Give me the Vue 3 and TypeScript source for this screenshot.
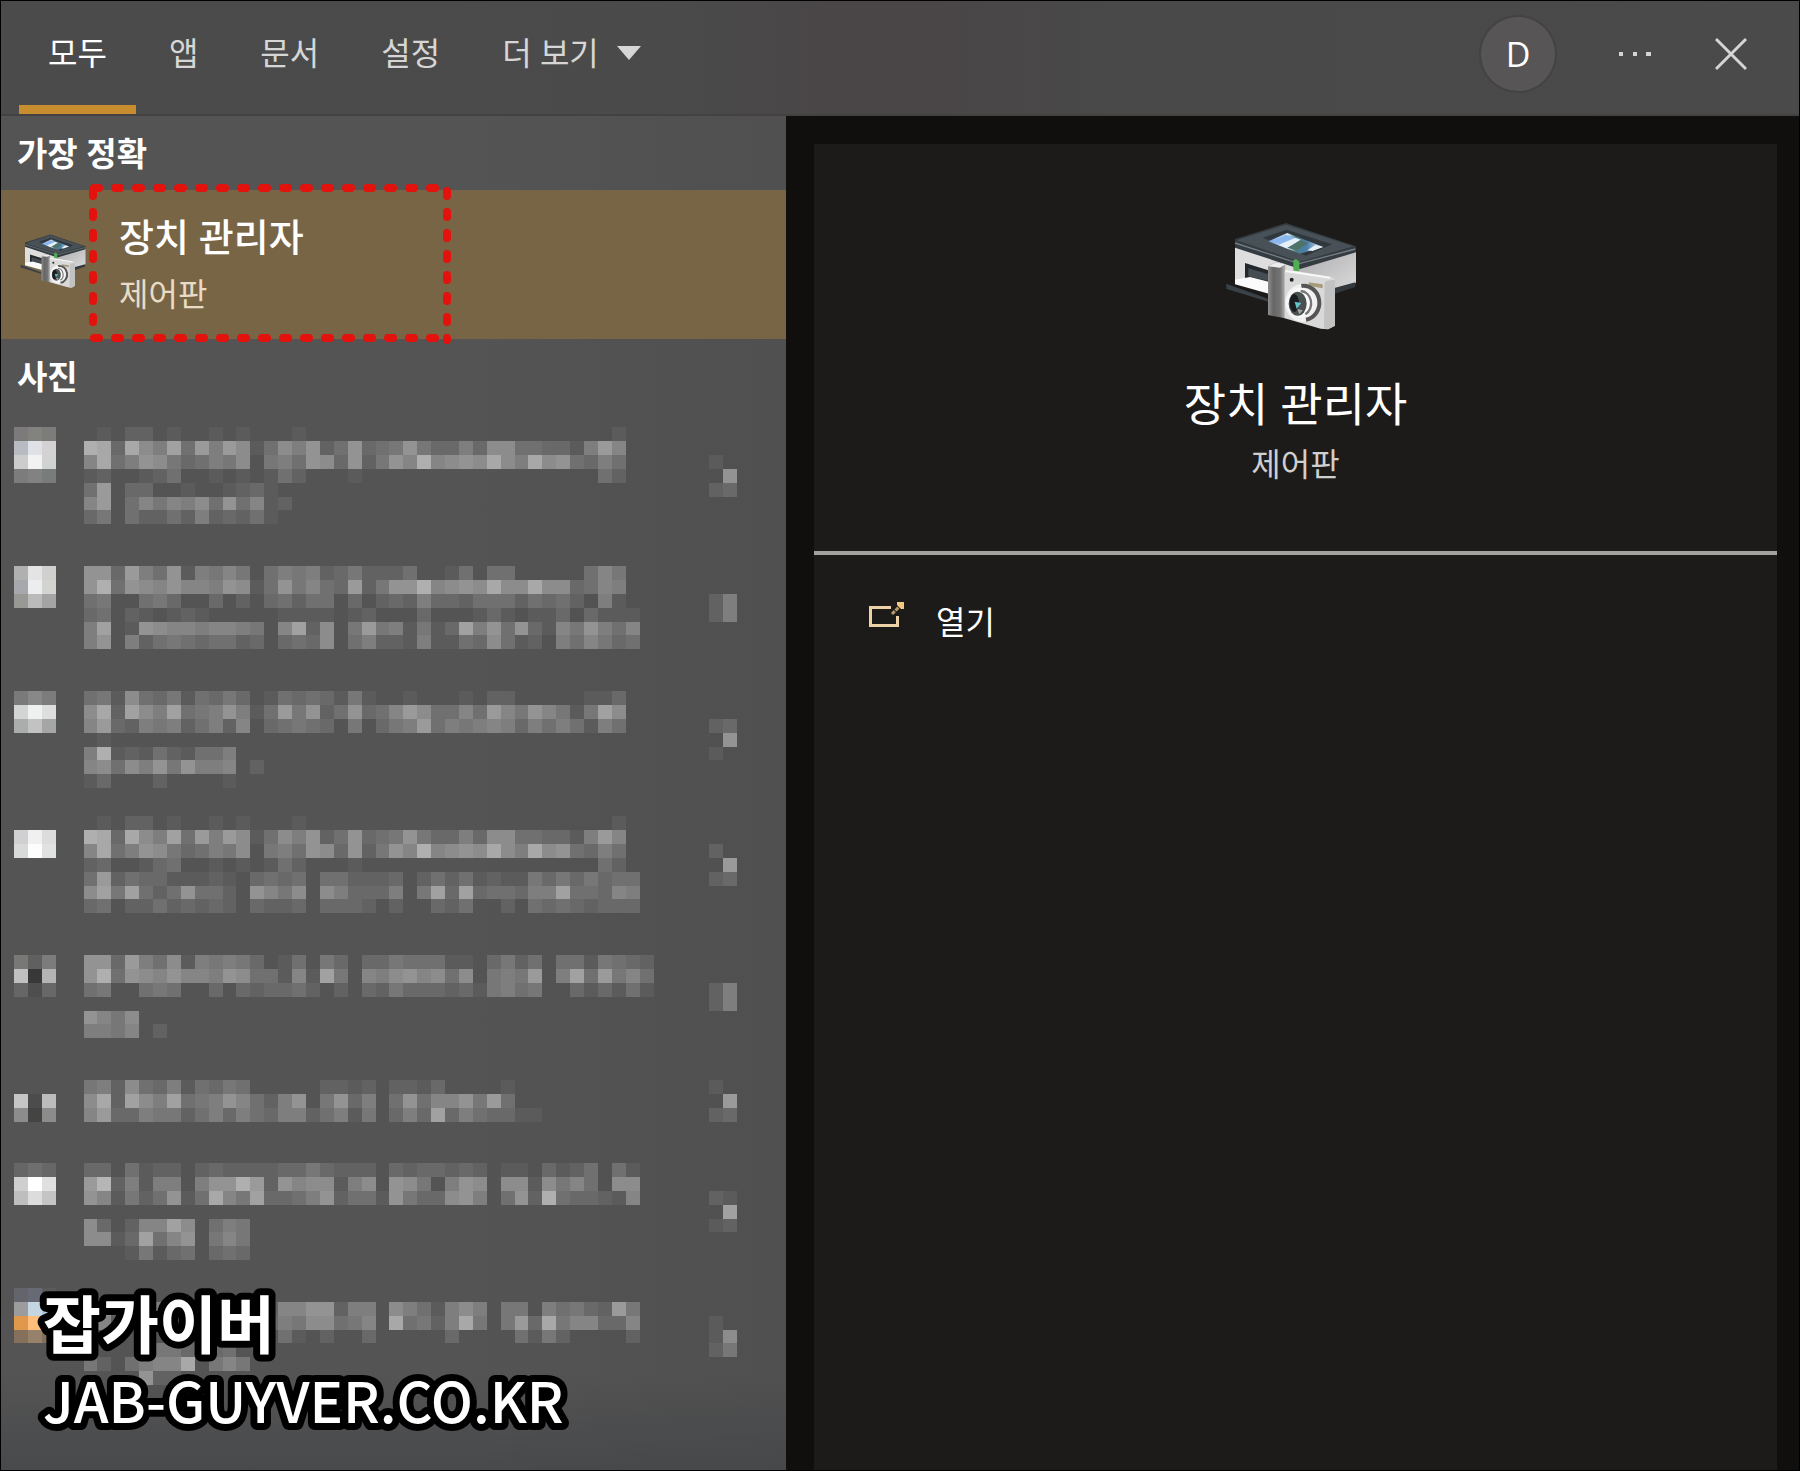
<script setup lang="ts">
import { ref } from 'vue'

interface Cell {
  x: number
  y: number
  fill: string
}

interface PhotoResult {
  rows: number
  thumbTop: number
  thumb: string[][]
  text: string[]
  chevronTop: number
  chevron: string[]
}

const tabs = ['모두', '앱', '문서', '설정']
const activeTab = ref('모두')

const MOSAIC_WIDTH = 723
const COLUMNS = 52
const TEXT_COL = 5
const CHEVRON_COL = 50

// Each character is the brightness of one mosaic tile; a dot leaves the panel visible.
const photos: PhotoResult[] = [
  {
    rows: 10,
    thumbTop: 0,
    thumb: [
      ['#7c7a7a', '#82827e', '#7c7c7a'],
      ['#b8bcc2', '#dfe1e6', '#d4d2d3'],
      ['#cccccc', '#f2f2f2', '#d1d3d2'],
      ['#7c7c7c', '#828282', '#787c7b'],
    ],
    text: [
      '.1.22.1..1.1...1......................1',
      'dc3c86b4a6a81486924934595336388443316a7',
      '7c4698534658.56498392597d7898c86c894364',
      '12..124..1.1.142...1.................42',
      '4a.33..1..1231',
      '7a.475768494712',
      '35.42242623241',
    ],
    chevronTop: 2,
    chevron: ['1.', '.9', '23'],
  },
  {
    rows: 9,
    thumbTop: 0,
    thumb: [
      ['#b0b0b0', '#e4e4e4', '#d0d0ce'],
      ['#a6a8ae', '#ebedee', '#d3d3d0'],
      ['#989894', '#bababa', '#a4a4a4'],
    ],
    text: [
      '993a64916575.46562352224..14.44.....475',
      '9d49879776981495743a2599d7898c88c883476',
      '45..453..3.2.34244.3.232633244424342.61',
      '34.21.121.....1111.12...3...131.113.3111',
      '6b.1987767765.7b28.5a561513b694931759647',
      '69.6245434423.3438.46221611438412.647534',
    ],
    chevronTop: 2,
    chevron: ['26', '26'],
  },
  {
    rows: 9,
    thumbTop: 0,
    thumb: [
      ['#7a7a7a', '#888888', '#7c7c7c'],
      ['#d3d5d4', '#eff0f0', '#dededf'],
      ['#abadac', '#c2c2c2', '#a4a6a5'],
    ],
    text: [
      '451843514353.14343151..1...1.22.....113',
      '8c2b86b4569614a59249347a84474a7597515b8',
      '7a3265624627.34543.5.356a46567636464164',
      '.1',
      '6d121421446',
      '78486959667.2',
      '13...2....1',
    ],
    chevronTop: 2,
    chevron: ['23', '.9', '1.'],
  },
  {
    rows: 10,
    thumbTop: 1,
    thumb: [
      ['#d0d0d2', '#f0f0f0', '#dcdcdc'],
      ['#d8dad9', '#fcfdfc', '#dfe2e1'],
    ],
    text: [
      '.1.22.1..1.1...1......................1',
      'dc3c86b4a6a81486924934595336388443316a7',
      '7c4698534658.56498392597d7898c86c894364',
      '23..134..1.1.142...1.................42',
      '4a243311121.3434.442223.2424121153535344',
      '8b5b4249442.9758.863336.5b3b344366b44376',
      '34.22423232.3223.3332.2..324..2.43432333',
    ],
    chevronTop: 2,
    chevron: ['2.', '.a', '23'],
  },
  {
    rows: 9,
    thumbTop: 0,
    thumb: [
      ['#787876', '#606060', '#7c7c7c'],
      ['#c0c0c0', '#383838', '#b4b4b4'],
      ['#666666', '#4e4e4e', '#686868'],
    ],
    text: [
      '993a648165653.14.53.33544411.3524.4415432',
      '9d498797769844171b5.76897848.565a.6b4a574',
      '45..454..3.323342.2.3253332315645..313141',
      '',
      '9758',
      '6657.2',
    ],
    chevronTop: 2,
    chevron: ['26', '26'],
  },
  {
    rows: 6,
    thumbTop: 1,
    thumb: [
      ['#c6c6c6', '#4c4c4c', '#bcbcbc'],
      ['#8c8c8c', '#444442', '#8c8c8c'],
    ],
    text: [
      '562843614354.....2212.2213....1',
      '8c2b86b456974269.5936.4947795a4',
      '7a3365524636436624615.363b3643311',
    ],
    chevronTop: 0,
    chevron: ['1.', '.a', '23'],
  },
  {
    rows: 9,
    thumbTop: 0,
    thumb: [
      ['#666666', '#6f6f6f', '#676767'],
      ['#cfcfcf', '#ffffff', '#e0e0e0'],
      ['#bebebe', '#dcdcdc', '#c4c4c4'],
    ],
    text: [
      '33.4122.2322223353222.3233232.11.3124.41',
      'ae26166.699da29788168.985.698.8818574.88',
      '971524914c75b3346924419533896.492d433217',
      '',
      '83.277b8.465',
      '8813b479.575',
      '...15134.343',
    ],
    chevronTop: 2,
    chevron: ['21', '.b', '12'],
  },
  {
    rows: 7,
    thumbTop: 0,
    thumb: [
      ['#64656c', '#676a74', '#585a5c'],
      ['#9c9c9e', '#c5d6e3', '#b0c4d8'],
      ['#e0984c', '#ffbf7a', '#f0b070'],
      ['#84705c', '#96826a', '#80705c'],
    ],
    text: [
      '',
      'a926166.699a927799266.8641686.55.64532a5',
      '971524914c75b36588457.c4526c5.5a3c577337',
      '..............41.2..3.....3....4152....2',
      '....1553.34',
      '52.4677c.575',
      '....922',
    ],
    chevronTop: 2,
    chevron: ['1.', '18', '25'],
  },
]

function shade(level: string): string {
  const v = 84 + parseInt(level, 16) * 7
  return `rgb(${v}, ${v}, ${v})`
}

function expand(lines: string[], left: number, top: number): Cell[] {
  return lines.flatMap((line, y) =>
    [...line].flatMap((c, x) => (c === '.' ? [] : [{ x: left + x, y: top + y, fill: shade(c) }])),
  )
}

function cells(photo: PhotoResult): Cell[] {
  const thumb = photo.thumb.flatMap((row, y) =>
    row.map((fill, x) => ({ x, y: photo.thumbTop + y, fill })),
  )
  return [
    ...thumb,
    ...expand(photo.text, TEXT_COL, 0),
    ...expand(photo.chevron, CHEVRON_COL, photo.chevronTop),
  ]
}

const results = photos.map((photo) => ({
  rows: photo.rows,
  height: Math.round((photo.rows * MOSAIC_WIDTH) / COLUMNS),
  cells: cells(photo),
}))
</script>

<template>
  <div class="window">
    <svg class="defs" width="0" height="0" aria-hidden="true">
      <defs>
        <linearGradient id="grip" x1="0" x2="1">
          <stop offset="0" stop-color="#8f8f8f" />
          <stop offset="0.3" stop-color="#666" />
          <stop offset="0.7" stop-color="#747474" />
          <stop offset="1" stop-color="#b5b5b5" />
        </linearGradient>
        <linearGradient id="side" x1="0" x2="1" y2="1">
          <stop offset="0" stop-color="#a9a9ab" />
          <stop offset="1" stop-color="#dcdcdd" />
        </linearGradient>
        <linearGradient id="photo" x1="0" x2="1">
          <stop offset="0" stop-color="#6f9fe4" />
          <stop offset="0.35" stop-color="#dcebf5" />
          <stop offset="0.5" stop-color="#4f7d86" />
          <stop offset="0.7" stop-color="#4a7fae" />
          <stop offset="1" stop-color="#e2eef3" />
        </linearGradient>
        <symbol id="device" viewBox="75 65 396 324">
          <path d="M78 250 L200 294 L210 306 L80 266Z" fill="#394248" />
          <path d="M105 138 L290 196 V290 L105 240Z" fill="#dededf" />
          <path d="M290 192 L468 150 V248 L400 276 L290 262Z" fill="url(#side)" />
          <path d="M400 264 L466 246 V260 L400 282Z" fill="#33393d" />
          <path d="M135 188 L212 212 V248 L135 234Z" fill="#22282c" />
          <path d="M145 204 L206 222 V242 L145 228Z" fill="#454d52" />
          <path d="M105 238 L150 230 L212 246 V282 L105 252Z" fill="#fbfbfb" />
          <path d="M105 116 L258 68 L468 138 V156 L300 206 L105 142Z" fill="#343c41" />
          <path d="M110 120 L258 73 L460 138 L300 184Z" fill="#485157" />
          <path d="M105 128 L298 190 L466 146" fill="none" stroke="#737d82" stroke-width="4" />
          <path d="M188 112 L260 88 L396 132 L318 166Z" fill="#30383d" />
          <path d="M205 123 L262 98 L370 140 L300 160Z" fill="url(#photo)" />
          <path d="M222 120 L258 103 L288 114 L238 132Z" fill="#8bb6ee" />
          <path d="M236 134 L286 112 L302 118 L262 144Z" fill="#e4f0f6" />
          <path d="M262 142 L302 120 L326 128 L290 150Z" fill="#4f7369" />
          <path d="M322 150 L346 134 L368 140 L338 152Z" fill="#e6f0f2" />
          <path d="M280 180 L288 176 L298 184 V212 H280Z" fill="#4fae50" />
          <path d="M204 198 L228 186 L256 192 V354 L204 344Z" fill="url(#grip)" />
          <path d="M204 198 L228 186 L256 192 L240 202Z" fill="#ededed" />
          <path d="M254 216 Q256 206 268 208 L394 230 Q405 232 405 244 V376 L384 387 L362 385 L254 354Z" fill="#d9d9d9" />
          <path d="M374 246 Q388 236 405 240 V376 L384 387 L372 384Z" fill="#c2c2c2" />
          <path d="M256 212 L390 232" stroke="#f8f8f8" stroke-width="6" />
          <circle cx="275" cy="238" r="6" fill="#242424" />
          <path d="M326 246 L368 252 V264 L326 256Z" fill="#a69c7c" />
          <ellipse cx="308" cy="308" rx="53" ry="57" fill="#f1f1f1" />
          <path d="M304 257 A47 51 0 0 1 318 358" fill="none" stroke="#555" stroke-width="12" />
          <ellipse cx="300" cy="307" rx="40" ry="45" fill="#fafafa" />
          <path d="M302 272 A32 37 0 0 1 316 342" fill="none" stroke="#777" stroke-width="7" />
          <ellipse cx="293" cy="310" rx="27" ry="36" fill="#4b5051" />
          <ellipse cx="283" cy="308" rx="14" ry="27" fill="#191d20" />
          <path d="M284 304 L304 308 L290 326Z" fill="#63c2cc" />
          <path d="M292 326 L308 330 L298 342Z" fill="#a8a8a8" />
        </symbol>
      </defs>
    </svg>

    <header class="topbar">
      <nav class="tabs">
        <button
          v-for="tab in tabs"
          :key="tab"
          type="button"
          class="tab"
          :class="{ active: tab === activeTab }"
          @click="activeTab = tab"
        >
          {{ tab }}
        </button>
        <button type="button" class="tab more">
          더 보기
          <svg class="caret" viewBox="0 0 24 14" aria-hidden="true"><path d="M0 0H24L12 14Z" fill="currentColor" /></svg>
        </button>
      </nav>
      <div class="actions">
        <button type="button" class="avatar">D</button>
        <button type="button" class="icon-button" aria-label="옵션">
          <svg width="32" height="6" viewBox="0 0 32 6" aria-hidden="true">
            <path d="M0 1h4v4h-4z M14 1h4v4h-4z M27 1h5v4h-5z" fill="#d4d4d4" />
          </svg>
        </button>
        <button type="button" class="icon-button" aria-label="닫기">
          <svg width="32" height="34" viewBox="0 0 32 34" aria-hidden="true">
            <path d="M1 2 L31 32 M31 2 L1 32" stroke="#d6d6d6" stroke-width="3" />
          </svg>
        </button>
      </div>
    </header>

    <div class="content">
      <aside class="results">
        <h2 class="group">가장 정확</h2>
        <button type="button" class="best">
          <svg class="best-icon" aria-hidden="true"><use href="#device" /></svg>
          <span class="best-text">
            <span class="best-title">장치 관리자</span>
            <span class="best-kind">제어판</span>
          </span>
          <svg class="marker" width="366" height="162" viewBox="0 0 366 162" aria-hidden="true">
            <path d="M7 6H360" />
            <path d="M360 9V158" />
            <path d="M7 156H360" />
            <path d="M6 9V156" />
          </svg>
        </button>
        <h2 class="group">사진</h2>
        <ul class="photos">
          <li v-for="(item, i) in results" :key="i">
            <svg
              class="mosaic"
              :viewBox="`0 0 ${COLUMNS} ${item.rows}`"
              :style="{ height: item.height + 'px' }"
              preserveAspectRatio="none"
              aria-hidden="true"
            >
              <rect v-for="(c, n) in item.cells" :key="n" :x="c.x" :y="c.y" width="1" height="1" :fill="c.fill" />
            </svg>
          </li>
        </ul>
      </aside>

      <main class="detail">
        <section class="card">
          <div class="summary">
            <svg class="hero" aria-hidden="true"><use href="#device" /></svg>
            <h1>장치 관리자</h1>
            <p>제어판</p>
          </div>
          <button type="button" class="open">
            <svg width="36" height="26" viewBox="0 0 36 26" aria-hidden="true">
              <path d="M0 4H22V7H3V22H27V14H30V25H0Z" fill="#ecd2a6" />
              <path d="M23 12L31 4" stroke="#b59a6c" stroke-width="3" stroke-dasharray="4 1" />
              <path d="M28 0H35V7H32L28 3Z" fill="#efc881" />
            </svg>
            <span>열기</span>
          </button>
        </section>
      </main>
    </div>

    <svg class="watermark" width="560" height="190" viewBox="0 0 560 190">
      <text class="mark-name" x="10" y="87">잡가이버</text>
      <text class="mark-site" x="10" y="162">JAB-GUYVER.CO.KR</text>
    </svg>
  </div>
</template>

<style>
body {
  margin: 0;
  background: #000;
}
</style>

<style scoped>
.window {
  position: relative;
  display: flex;
  flex-direction: column;
  box-sizing: border-box;
  min-height: 100vh;
  border: 1px solid #000;
  color: #fff;
  font-family: "Open Sans", "Noto Sans CJK KR", sans-serif;
  font-size: 32px;
  line-height: 40px;
}

.defs {
  position: absolute;
}

button {
  margin: 0;
  padding: 0;
  border: 0;
  background: none;
  color: inherit;
  font: inherit;
  text-align: left;
}

.topbar {
  display: flex;
  justify-content: space-between;
  box-sizing: border-box;
  height: 115px;
  border-bottom: 2px solid #434142;
  background: linear-gradient(90deg, #4b4b4b 0%, #4a4a4a 38%, #4a4647 46%, #4a4647 52%, #494949 62%, #4a4a4a 100%);
}

.tabs {
  display: flex;
  gap: 4px;
  padding-left: 18px;
}

.tab {
  display: flex;
  align-items: center;
  padding: 0 29px;
  border-bottom: 9px solid transparent;
  color: #d6d6d6;
  white-space: nowrap;
}

.tab.active {
  border-bottom-color: #c88d2f;
  color: #fff;
}

.more {
  gap: 18px;
}

.caret {
  width: 24px;
  height: 14px;
}

.actions {
  display: flex;
  align-items: center;
  padding: 0 52px 8px 0;
}

.avatar {
  width: 74px;
  height: 74px;
  border-radius: 50%;
  background: #575556;
  box-shadow: 0 0 0 2px #444344;
  text-align: center;
  font-size: 34px;
}

.icon-button {
  display: flex;
  align-items: center;
  margin-left: 64px;
}

.content {
  display: flex;
  flex: 1;
}

.results {
  flex: 0 0 785px;
  background:
    linear-gradient(180deg, transparent 1260px, rgba(64, 66, 70, 0.6) 1355px),
    linear-gradient(90deg, #545454 0%, #545454 60%, #515151 85%, #505050 100%);
}

.group {
  margin: 0;
  padding: 18px 16px 16px;
  font-size: 33px;
  font-weight: 700;
  line-height: 40px;
}

.best {
  position: relative;
  display: flex;
  align-items: center;
  box-sizing: border-box;
  gap: 33px;
  width: 100%;
  height: 149px;
  padding: 0 0 4px 19px;
  background: #786546;
}

.best-icon {
  width: 66px;
  height: 54px;
  margin-bottom: 4px;
}

.best-text {
  display: flex;
  flex-direction: column;
  gap: 14px;
}

.best-title {
  font-size: 38px;
  font-weight: 500;
  line-height: 48px;
}

.best-kind {
  color: #e8dcc6;
}

.marker {
  position: absolute;
  top: -8px;
  left: 86px;
}

.marker path {
  fill: none;
  stroke: #e3120d;
  stroke-width: 8;
  stroke-linecap: round;
  stroke-dasharray: 5 16;
}

.photos {
  margin: 0;
  padding: 14px 0 0 13px;
  list-style: none;
}

.mosaic {
  display: block;
  width: 723px;
  shape-rendering: crispEdges;
}

.detail {
  display: flex;
  flex: 1;
  padding: 28px 22px 0 28px;
  background: #110f0d;
}

.card {
  flex: 1;
  background: #1c1b19;
}

.summary {
  display: flex;
  flex-direction: column;
  align-items: center;
  padding: 78px 0 67px;
  border-bottom: 4px solid #a3a2a2;
}

.hero {
  width: 132px;
  height: 108px;
  margin-right: 10px;
}

h1 {
  margin: 45px 0 13px;
  font-size: 46px;
  font-weight: 400;
  line-height: 56px;
}

.summary p {
  margin: 0;
  color: #cfcfcf;
}

.open {
  display: flex;
  gap: 31px;
  width: 100%;
  padding: 47px 55px;
}

.watermark {
  position: absolute;
  bottom: 19px;
  left: 32px;
  fill: #fff;
  stroke: #000;
  stroke-width: 14;
  stroke-linejoin: round;
  paint-order: stroke;
  font-family: "Noto Sans CJK KR", sans-serif;
}

.mark-name {
  font-size: 63px;
  font-weight: 700;
}

.mark-site {
  font-size: 56px;
  font-weight: 500;
}
</style>
